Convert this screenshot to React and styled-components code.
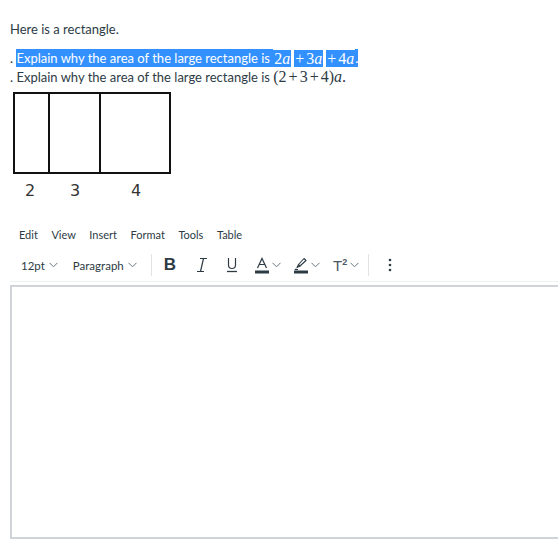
import styled, { createGlobalStyle } from 'styled-components';

const GlobalStyle = createGlobalStyle`
  html, body {
    margin: 0;
    padding: 0;
    background: #fff;
  }
  body {
    font-family: Lato, 'Liberation Sans', sans-serif;
    color: #2d3b45;
  }
`;

const Page = styled.div`
  width: 558px;
  height: 542px;
  overflow: hidden;
  box-sizing: border-box;
  padding: 21px 0 0 10px;
`;

const Para = styled.p`
  margin: 0;
  font-size: 13px;
  line-height: 16px;
  height: 16px;
  white-space: nowrap;
`;

const Question = styled.div`
  margin-top: 13px;
  display: flex;
  flex-direction: column;
  gap: 3px;
`;

const Line = styled.div`
  font-size: 13px;
  line-height: 16px;
  height: 16px;
  white-space: nowrap;
  display: flex;
  align-items: center;
`;

const Sel = styled.span`
  background: #3390ff;
  color: #fff;
  padding: 1px 0;
`;

const Math = styled.span`
  font-family: 'Liberation Serif', 'DejaVu Serif', serif;
  font-size: 16px;
  font-style: ${({ italic }) => (italic ? 'italic' : 'normal')};
`;

const Op = styled.span`
  padding: 0 2px;
`;

const MathSel = styled(Math)`
  background: #3390ff;
  color: #fff;
  line-height: 17px;
  padding: 0 1px;
  margin-right: ${({ gap }) => gap}px;
`;

const Figure = styled.div`
  margin: 7px 0 0 3px;
`;

const Labels = styled.div`
  display: flex;
  font-family: 'DejaVu Sans', sans-serif;
  font-size: 16px;
  color: #333;
  height: 20px;
  line-height: 20px;
  margin-top: 4px;
`;

const Label = styled.span`
  width: ${({ w }) => w}px;
  padding-left: ${({ pad }) => pad}px;
  box-sizing: border-box;
`;

const MenuBar = styled.div`
  display: flex;
  gap: 13.5px;
  margin: 27px 0 0 9px;
  font-size: 11px;
  line-height: 14px;
  color: #2d3b45;
`;

const Toolbar = styled.div`
  display: flex;
  align-items: center;
  height: 32px;
  margin-top: 7px;
  padding-left: 11px;
  border-bottom: 1px solid #eef0f1;
`;

const Drop = styled.div`
  display: flex;
  align-items: center;
  gap: 4px;
  font-size: 11.5px;
  margin-right: ${({ mr }) => mr}px;
`;

const Sep = styled.div`
  width: 1px;
  height: 22px;
  background: #dfe3e6;
  margin: 0 ${({ mr }) => mr}px 0 ${({ ml }) => ml}px;
`;

const Tool = styled.div`
  display: flex;
  align-items: center;
  gap: 3px;
  margin-right: ${({ mr }) => mr}px;
  color: #2d3b45;
`;

const BoldB = styled.span`
  font-family: 'Liberation Sans', Arial, sans-serif;
  font-weight: 700;
  font-size: 17px;
`;

const SupT = styled.span`
  font-family: 'Liberation Sans', Arial, sans-serif;
  font-size: 15px;
  color: #4a5660;
  sup {
    font-size: 9px;
    font-weight: 700;
    vertical-align: 6px;
  }
`;

const Editor = styled.div`
  margin-top: 3px;
  height: 254px;
  border: 2px solid #d0d4d8;
  border-right: none;
  box-sizing: border-box;
`;

const Chevron = () => (
  <svg width="9" height="6" viewBox="0 0 9 6">
    <polyline points="0.5,0.8 4.5,4.8 8.5,0.8" fill="none" stroke="#6b7780" strokeWidth="1" />
  </svg>
);

const ItalicIcon = () => (
  <svg width="12" height="16" viewBox="0 0 12 16">
    <path d="M4 1.5h7M1 14.5h7M7.5 1.5L4.5 14.5" fill="none" stroke="#2d3b45" strokeWidth="1.2" />
  </svg>
);

const UnderlineIcon = () => (
  <svg width="12" height="16" viewBox="0 0 12 16">
    <path d="M2.5 1v7a3.5 3.5 0 0 0 7 0V1" fill="none" stroke="#2d3b45" strokeWidth="1.2" />
    <path d="M1 14.5h10" stroke="#2d3b45" strokeWidth="1.3" />
  </svg>
);

const TextColorIcon = () => (
  <svg width="14" height="17" viewBox="0 0 14 17">
    <path d="M2.5 11L7 1.5 11.5 11M4.2 7.5h5.6" fill="none" stroke="#2d3b45" strokeWidth="1.2" />
    <rect x="0" y="13.5" width="14" height="3" fill="#2d3b45" />
  </svg>
);

const HighlightIcon = () => (
  <svg width="14" height="17" viewBox="0 0 14 17">
    <path d="M3 10.5l1.5-3 5.5-6 2 2-6 5.5-3 1.5z M4.5 7.5l2 2" fill="none" stroke="#2d3b45" strokeWidth="1.1" strokeLinejoin="round" />
    <path d="M2 11.5l-1 1h3" fill="none" stroke="#2d3b45" strokeWidth="1" />
    <rect x="0" y="13.5" width="14" height="3" fill="#2d3b45" />
  </svg>
);

const MoreIcon = () => (
  <svg width="4" height="14" viewBox="0 0 4 14">
    <circle cx="2" cy="2" r="1.3" fill="#2d3b45" />
    <circle cx="2" cy="7" r="1.3" fill="#2d3b45" />
    <circle cx="2" cy="12" r="1.3" fill="#2d3b45" />
  </svg>
);

const Rectangle = () => (
  <svg width="158" height="82" viewBox="0 0 158 82">
    <rect x="1" y="1" width="156" height="80" fill="#fff" stroke="#111" strokeWidth="2" />
    <line x1="36" y1="1" x2="36" y2="81" stroke="#111" strokeWidth="2" />
    <line x1="87" y1="1" x2="87" y2="81" stroke="#111" strokeWidth="2" />
  </svg>
);

export default function App() {
  return (
    <>
      <GlobalStyle />
      <Page>
        <Para>Here is a rectangle.</Para>
        <Question>
          <Line>
            <span>.&nbsp;</span>
            <Sel>Explain why the area of the large rectangle is&nbsp;</Sel>
            <MathSel gap={3}>2<Math italic>a</Math></MathSel>
            <MathSel gap={0}>+</MathSel>
            <MathSel gap={3}>3<Math italic>a</Math></MathSel>
            <MathSel gap={0}>+</MathSel>
            <MathSel gap={0}>4<Math italic>a</Math></MathSel>
            <Sel>.</Sel>
          </Line>
          <Line>
            <span>. Explain why the area of the large rectangle is&nbsp;</span>
            <Math>(2<Op>+</Op>3<Op>+</Op>4)<Math italic>a</Math>.</Math>
          </Line>
        </Question>
        <Figure>
          <Rectangle />
        </Figure>
        <Labels>
          <Label w={52} pad={15}>2</Label>
          <Label w={50} pad={8}>3</Label>
          <Label w={40} pad={19}>4</Label>
        </Labels>
        <MenuBar>
          <span>Edit</span>
          <span>View</span>
          <span>Insert</span>
          <span>Format</span>
          <span>Tools</span>
          <span>Table</span>
        </MenuBar>
        <Toolbar>
          <Drop mr={15}>12pt <Chevron /></Drop>
          <Drop mr={0}>Paragraph <Chevron /></Drop>
          <Sep ml={14} mr={12} />
          <Tool mr={20}><BoldB>B</BoldB></Tool>
          <Tool mr={18}><ItalicIcon /></Tool>
          <Tool mr={17}><UnderlineIcon /></Tool>
          <Tool mr={13}><TextColorIcon /><Chevron /></Tool>
          <Tool mr={13}><HighlightIcon /><Chevron /></Tool>
          <Tool mr={9}><SupT>T<sup>2</sup></SupT><Chevron /></Tool>
          <Sep ml={0} mr={19} />
          <Tool mr={0}><MoreIcon /></Tool>
        </Toolbar>
        <Editor />
      </Page>
    </>
  );
}
